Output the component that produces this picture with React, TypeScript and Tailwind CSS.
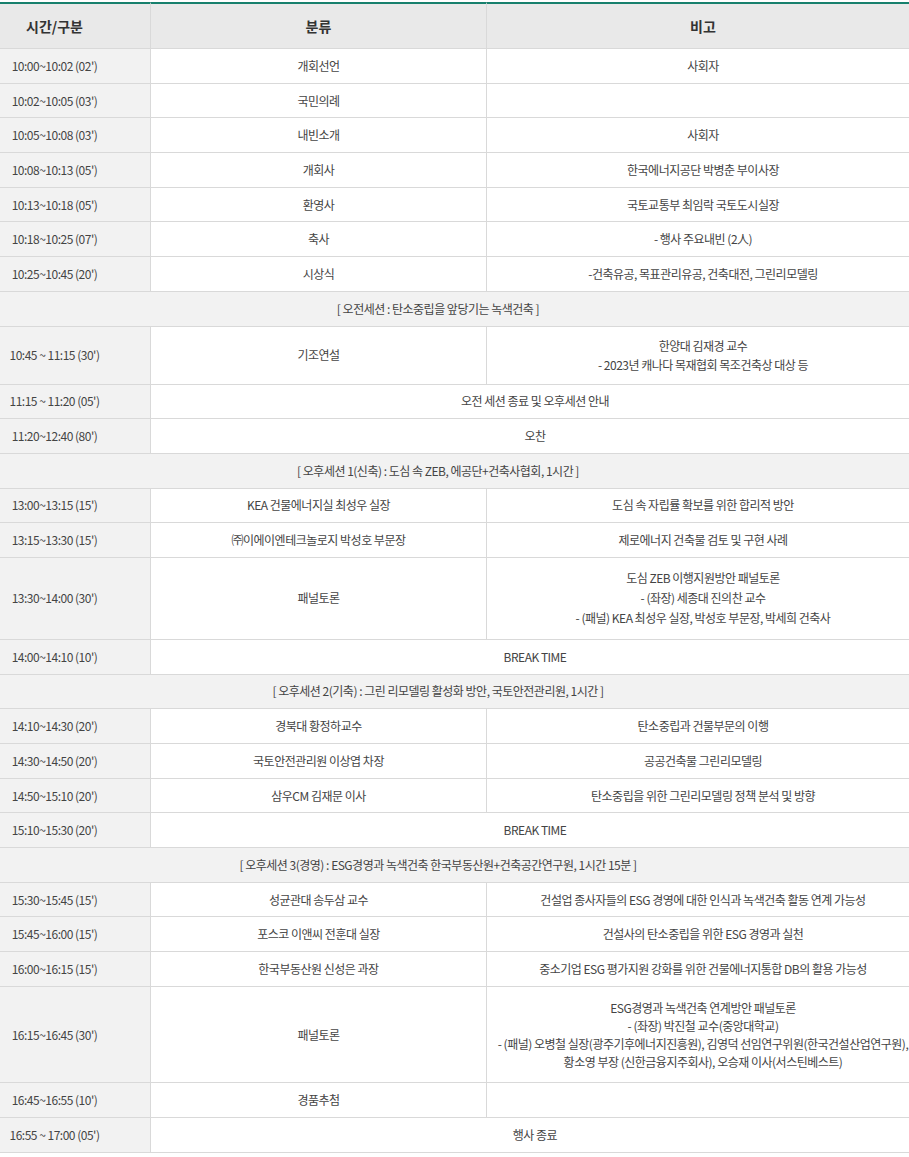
const FONT = "font-['Noto_Sans_CJK_KR','Noto_Sans',sans-serif]";

type Item = {
  time: string;
  what?: string;
  note?: string[];
  span?: boolean; // 분류+비고 merged
  h: string;
  lead?: string;
};
type Row = { section: string } | Item;

const H = "h-[34.7px]";

const rows: Row[] = [
  { time: "10:00~10:02 (02')", what: "개회선언", note: ["사회자"], h: H },
  { time: "10:02~10:05 (03')", what: "국민의례", h: H },
  { time: "10:05~10:08 (03')", what: "내빈소개", note: ["사회자"], h: H },
  { time: "10:08~10:13 (05')", what: "개회사", note: ["한국에너지공단 박병춘 부이사장"], h: H },
  { time: "10:13~10:18 (05')", what: "환영사", note: ["국토교통부 최임락 국토도시실장"], h: H },
  { time: "10:18~10:25 (07')", what: "축사", note: ["- 행사 주요내빈 (2人)"], h: H },
  { time: "10:25~10:45 (20')", what: "시상식", note: ["-건축유공, 목표관리유공, 건축대전, 그린리모델링"], h: H },
  { section: "[ 오전세션 : 탄소중립을 앞당기는 녹색건축 ]" },
  {
    time: "10:45 ~ 11:15 (30')",
    what: "기조연설",
    note: ["한양대 김재경 교수", "- 2023년 캐나다 목재협회 목조건축상 대상 등"],
    h: "h-[58px]",
    lead: "leading-[19px]",
  },
  { time: "11:15 ~ 11:20 (05')", what: "오전 세션 종료 및 오후세션 안내", span: true, h: H },
  { time: "11:20~12:40 (80')", what: "오찬", span: true, h: H },
  { section: "[ 오후세션 1(신축) : 도심 속 ZEB, 에공단+건축사협회, 1시간 ]" },
  { time: "13:00~13:15 (15')", what: "KEA 건물에너지실 최성우 실장", note: ["도심 속 자립률 확보를 위한 합리적 방안"], h: H },
  { time: "13:15~13:30 (15')", what: "㈜이에이엔테크놀로지 박성호 부문장", note: ["제로에너지 건축물 검토 및 구현 사례"], h: H },
  {
    time: "13:30~14:00 (30')",
    what: "패널토론",
    note: [
      "도심 ZEB 이행지원방안 패널토론",
      "- (좌장) 세종대 진의찬 교수",
      "- (패널) KEA 최성우 실장, 박성호 부문장, 박세희 건축사",
    ],
    h: "h-[82px]",
    lead: "leading-[20px]",
  },
  { time: "14:00~14:10 (10')", what: "BREAK TIME", span: true, h: H },
  { section: "[ 오후세션 2(기축) : 그린 리모델링 활성화 방안, 국토안전관리원, 1시간 ]" },
  { time: "14:10~14:30 (20')", what: "경북대 황정하교수", note: ["탄소중립과 건물부문의 이행"], h: H },
  { time: "14:30~14:50 (20')", what: "국토안전관리원 이상엽 차장", note: ["공공건축물 그린리모델링"], h: H },
  { time: "14:50~15:10 (20')", what: "삼우CM 김재문 이사", note: ["탄소중립을 위한 그린리모델링 정책 분석 및 방향"], h: H },
  { time: "15:10~15:30 (20')", what: "BREAK TIME", span: true, h: H },
  { section: "[ 오후세션 3(경영) : ESG경영과 녹색건축 한국부동산원+건축공간연구원, 1시간 15분 ]" },
  { time: "15:30~15:45 (15')", what: "성균관대 송두삼 교수", note: ["건설업 종사자들의 ESG 경영에 대한 인식과 녹색건축 활동 연계 가능성"], h: H },
  { time: "15:45~16:00 (15')", what: "포스코 이앤씨 전훈대 실장", note: ["건설사의 탄소중립을 위한 ESG 경영과 실천"], h: H },
  { time: "16:00~16:15 (15')", what: "한국부동산원 신성은 과장", note: ["중소기업 ESG 평가지원 강화를 위한 건물에너지통합 DB의 활용 가능성"], h: H },
  {
    time: "16:15~16:45 (30')",
    what: "패널토론",
    note: [
      "ESG경영과 녹색건축 연계방안 패널토론",
      "- (좌장) 박진철 교수(중앙대학교)",
      "- (패널) 오병철 실장(광주기후에너지진흥원), 김영덕 선임연구위원(한국건설산업연구원),",
      "황소영 부장 (신한금융지주회사), 오승재 이사(서스틴베스트)",
    ],
    h: "h-[96.5px]",
    lead: "leading-[18px]",
  },
  { time: "16:45~16:55 (10')", what: "경품추첨", h: H },
  { time: "16:55 ~ 17:00 (05')", what: "행사 종료", span: true, h: H },
];

const cell = "border-b border-[#d9d9d9] text-center align-middle p-0";

export default function App() {
  return (
    <div className={`w-[909px] overflow-hidden bg-white pt-[2px] text-[12px] tracking-[-0.5px] text-[#444] ${FONT}`}>
      <table className="w-[919px] table-fixed border-separate border-spacing-0">
        <colgroup>
          <col className="w-[151px]" />
          <col className="w-[336px]" />
          <col className="w-[432px]" />
        </colgroup>
        <thead>
          <tr className="h-[47px] bg-[#e9e9e9] text-[14px] font-medium tracking-normal text-[#333]">
            <th className={`${cell} border-t-2 border-t-[#17806d] border-r pr-[41px]`}>시간/구분</th>
            <th className={`${cell} border-t-2 border-t-[#17806d] border-r`}>분류</th>
            <th className={`${cell} border-t-2 border-t-[#17806d]`}>비고</th>
          </tr>
        </thead>
        <tbody>
          {rows.map((r, i) => {
            if ("section" in r) {
              return (
                <tr key={i} className="h-[34.7px] bg-[#f2f2f2]">
                  <td colSpan={3} className={`${cell} pr-[43px]`}>
                    {r.section}
                  </td>
                </tr>
              );
            }
            return (
              <tr key={i} className={r.h}>
                <td className={`${cell} border-r bg-[#f2f2f2] pr-[41px]`}>{r.time}</td>
                {r.span ? (
                  <td colSpan={2} className={cell}>
                    {r.what}
                  </td>
                ) : (
                  <>
                    <td className={`${cell} border-r`}>{r.what}</td>
                    <td className={`${cell} ${r.lead ?? ""}`}>
                      {r.note?.map((n) => (
                        <p key={n}>{n}</p>
                      ))}
                    </td>
                  </>
                )}
              </tr>
            );
          })}
        </tbody>
      </table>
    </div>
  );
}
